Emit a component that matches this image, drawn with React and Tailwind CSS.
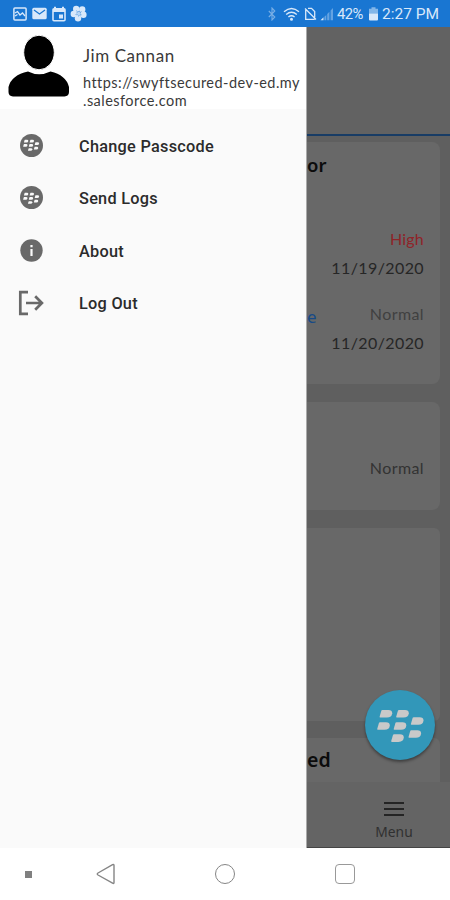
const BERRIES = [
  [14.4, 20],
  [31, 20],
  [12, 32.2],
  [28.5, 32.2],
  [45.7, 27.2],
  [43.3, 40.2],
  [26, 44.3],
];

function Berry({ className }) {
  return (
    <svg viewBox="0 0 70 70" className={className} fill="currentColor">
      {BERRIES.map(([x, y]) => (
        <path key={`${x}-${y}`} transform={`translate(${x} ${y})`} d="M2 .6Q2.2 0 3 0H9Q12.8 0 12.8 3.2Q12.4 7.6 7.6 7.6H.8Q0 7.6.2 6.8Z" />
      ))}
    </svg>
  );
}

function BerryBadge() {
  return (
    <span className="flex size-[23px] items-center justify-center rounded-full bg-[#696969] text-[#fafafa]">
      <Berry className="size-[24px] shrink-0" />
    </span>
  );
}

function InfoBadge() {
  return (
    <svg viewBox="0 0 23 23" className="size-[23px]">
      <circle cx="11.5" cy="11.5" r="11.2" fill="#696969" />
      <path d="M10.4 6h2.2v2.3h-2.2zM10.4 10h2.2v7h-2.2z" fill="#fafafa" />
    </svg>
  );
}

function LogOutIcon() {
  return (
    <svg viewBox="0 0 26 26" className="size-[26px]" fill="none" stroke="#696969" strokeWidth="2.7">
      <path d="M10 2.2H2.3v21.6H10" />
      <path d="M8 13h15.5M17.2 6.3 23.9 13l-6.7 6.7" />
    </svg>
  );
}

function StatusBar() {
  return (
    <header className="flex h-[27px] items-center bg-[#1976d2] pl-[13px] text-[#d8e8fa]">
      <svg viewBox="0 0 14 14" className="h-[14px] w-[14px]" fill="none" stroke="currentColor" strokeWidth="1.5">
        <rect x=".9" y=".9" width="12.2" height="12.2" rx="1" />
        <path d="M2 6 4.500 4.500 7 8l2.500-2L12 9M2 9l2.500-1.500" strokeWidth="1.3" />
      </svg>
      <svg viewBox="0 0 15 13" className="ml-[5px] h-[13px] w-[15px]">
        <rect x=".3" y=".8" width="14.4" height="11.4" rx="1.5" fill="currentColor" />
        <path d="m2 3 5.5 4L13 3" fill="none" stroke="#1976d2" strokeWidth="1.2" />
      </svg>
      <svg viewBox="0 0 14 16" className="ml-[5px] h-[16px] w-[14px]">
        <path d="M3 .8v3M11 .8v3" stroke="currentColor" strokeWidth="2" />
        <rect x="1" y="2.8" width="12" height="12" rx="1" fill="none" stroke="currentColor" strokeWidth="1.6" />
        <path d="M1 3h12v3H1zM7 8.5h4v4H7z" fill="currentColor" />
      </svg>
      <svg viewBox="0 0 17 17" className="ml-[4px] h-[17px] w-[17px]">
        <g fill="currentColor">
          <circle cx="6.2" cy="4" r="3.2" />
          <circle cx="12.2" cy="4.4" r="3.2" />
          <circle cx="3.8" cy="9" r="3.2" />
          <circle cx="13.4" cy="9.8" r="3.2" />
          <circle cx="8" cy="13.2" r="3.2" />
        </g>
        <path d="m8.5 8.5-2-3M8.5 8.5l3-2M8.5 8.5l-3 1M8.5 8.5v3M8.5 8.5l3 1.3" stroke="#5f9fe0" strokeWidth=".8" />
        <circle cx="8.7" cy="8.6" r="1.8" fill="#b8d6f5" />
      </svg>
      <svg viewBox="0 0 8 14" className="ml-[181px] h-[14px] w-[8px] opacity-50" fill="none" stroke="currentColor" strokeWidth="1.1">
        <path d="m.8 4 6 6L4 13V1l2.8 3-6 6" />
      </svg>
      <svg viewBox="0 0 17 14" className="ml-[7px] h-[14px] w-[17px]" fill="none" stroke="currentColor" strokeWidth="1.4">
        <path d="M1 4.8Q8.5-1.9 16 4.8M3.2 7.5q5.3-4.4 10.6 0M5.4 10q3.1-2.4 6.2 0" />
        <circle cx="8.5" cy="12.3" r=".8" fill="currentColor" />
      </svg>
      <svg viewBox="0 0 13 14" className="ml-[4px] h-[14px] w-[13px]" fill="none" stroke="currentColor" strokeWidth="1.3">
        <path d="M4 1.4h3.5l3.2 3.2v6M1.7 3v9.4h9M1 1.5l11 11" />
      </svg>
      <svg viewBox="0 0 14 14" className="ml-[3px] h-[14px] w-[14px]" fill="currentColor">
        <path d="M.5 13.2h3v-3z" />
        <path d="M4.4 9.7v3.5h1.9V8zM7.2 7v6.2h2.2V4.8zM10.6 3.6v9.6H13V1z" opacity=".4" />
      </svg>
      <span className="ml-[3px] w-[27px] whitespace-nowrap pt-[2px] font-[Roboto,sans-serif] text-[14.8px] leading-[25px] tracking-[-0.6px]">42%</span>
      <svg viewBox="0 0 9 14" className="ml-[5px] h-[14px] w-[9px]">
        <path d="M2.5.3h4v1.5H9v5H0v-5h2.5z" fill="#82b6e9" />
        <path d="M0 6.6h9v6q0 1-1 1H1q-1 0-1-1z" fill="currentColor" />
      </svg>
      <span className="ml-[4px] whitespace-nowrap pt-[2px] font-[Roboto,sans-serif] text-[15.5px] leading-[25px]">2:27 PM</span>
    </header>
  );
}

function Profile() {
  return (
    <div className="flex h-[82px] shrink-0 bg-white">
      <svg viewBox="0 0 62 63" className="ml-[8px] mt-[8px] h-[63px] w-[62px] shrink-0">
        <path d="M20 36.500Q31 42 42.500 36.500 58 40 61 52V57Q61 61 56.500 61.500H5Q.5 61 .5 57V52Q3.500 40 20 36.500Z" />
        <ellipse cx="31" cy="17.500" rx="15.300" ry="17.300" stroke="#fff" strokeWidth="1" />
      </svg>
      <div className="ml-[13px] whitespace-nowrap font-[Lato,sans-serif] text-[#3a3a3a]">
        <p className="mt-[19px] text-[17px] leading-[20px] tracking-[0.55px]">Jim Cannan</p>
        <p className="mt-[8px] text-[14.5px] leading-[18px] tracking-[0.46px]">
          https://swyftsecured-dev-ed.my
          <br />
          .salesforce.com
        </p>
      </div>
    </div>
  );
}

const MENU = [
  ["Change Passcode", <BerryBadge />],
  ["Send Logs", <BerryBadge />],
  ["About", <InfoBadge />],
  ["Log Out", <LogOutIcon />],
];

function Drawer() {
  return (
    <aside className="flex w-[307px] shrink-0 flex-col border-r border-[#aaa] bg-[#fafafa]">
      <Profile />
      <nav className="mt-[10px] flex flex-col">
        {MENU.map(([label, icon]) => (
          <div key={label} className="flex h-[52.5px] items-center">
            <span className="ml-[18px] flex w-[26px] items-center justify-center">{icon}</span>
            <span className="ml-[35px] whitespace-nowrap pt-[3px] font-[Roboto,sans-serif] text-[16.3px] font-medium leading-[20px] tracking-[0.27px] text-[#2b2b2b]">
              {label}
            </span>
          </div>
        ))}
      </nav>
    </aside>
  );
}

function Backdrop() {
  return (
    <main className="relative flex min-w-0 flex-1 flex-col overflow-hidden bg-[#5f5f5f] font-[Lato,sans-serif]">
      <div className="h-[109px] shrink-0 border-b-2 border-[#183c65] bg-[#626262]" />
      <section className="mr-[10px] mt-[6px] flex h-[242px] shrink-0 flex-col rounded-r-[8px] bg-[#686868] pr-[16px]">
        <h2 className="mt-[11px] font-['Noto_Sans',sans-serif] text-[18.5px] font-semibold leading-[24px] text-[#0c0c0c]">or</h2>
        <p className="mt-[51px] text-right text-[16px] leading-[22px] tracking-[0.2px] text-[#8f2428]">High</p>
        <p className="mt-[7px] whitespace-nowrap text-right text-[16px] leading-[22px] tracking-[0.4px] text-[#262626]">11/19/2020</p>
        <div className="mt-[24px] flex items-start justify-between leading-[22px]">
          <span className="mt-[3px] font-['Noto_Sans',sans-serif] text-[17px] text-[#174a87]">e</span>
          <span className="text-[16px] tracking-[0.4px] text-[#404040]">Normal</span>
        </div>
        <p className="mt-[4px] whitespace-nowrap text-right text-[16px] leading-[22px] tracking-[0.4px] text-[#262626]">11/20/2020</p>
      </section>
      <section className="mr-[10px] mt-[18px] h-[108px] shrink-0 rounded-r-[8px] bg-[#686868] pr-[16px] pt-[55px] text-right text-[16px] leading-[22px] tracking-[0.4px] text-[#333]">
        Normal
      </section>
      <section className="mr-[10px] mt-[18px] h-[193px] shrink-0 rounded-r-[6px] bg-[#686868]" />
      <section className="mr-[10px] mt-[17px] h-[44px] shrink-0 rounded-tr-[6px] bg-[#686868] pt-[10px]">
        <h2 className="font-['Noto_Sans',sans-serif] text-[19.5px] font-semibold leading-[24px] text-[#0c0c0c]">ed</h2>
      </section>
      <footer className="flex flex-1 flex-col items-center bg-[#646464] pl-[31px] shadow-[inset_0_-1px_0_#444]">
        <svg viewBox="0 0 20 14" className="mt-[20px] h-[14px] w-[20px]">
          <path d="M0 1h20M0 7h20M0 13h20" stroke="#242424" strokeWidth="1.8" />
        </svg>
        <span className="mt-[6px] font-['Noto_Sans',sans-serif] text-[13.8px] leading-[19px] text-[#303030]">Menu</span>
      </footer>
      <button className="absolute left-[58px] top-[663px] size-[70px] rounded-full bg-[#3297b9] text-[#c9c9c9] shadow-[0_2px_3px_rgba(0,0,0,0.4)]">
        <Berry className="size-[70px]" />
      </button>
    </main>
  );
}

function SystemNav() {
  return (
    <footer className="flex h-[52px] items-center bg-white">
      <span className="ml-[25px] size-[7px] bg-[#808080]" />
      <svg viewBox="0 0 20 22" className="ml-[64px] h-[22px] w-[20px]" fill="none" stroke="#858585" strokeWidth="1.4" strokeLinejoin="round">
        <path d="M16.600 1.700Q18 1 18 2.600V19.400Q18 21 16.600 20.200L2 12Q.5 11 2 10Z" />
      </svg>
      <span className="ml-[99px] size-[20px] rounded-full border-[1.5px] border-[#858585]" />
      <span className="ml-[100px] size-[20px] rounded-[4px] border-[1.5px] border-[#999]" />
    </footer>
  );
}

export default function App() {
  return (
    <div className="flex h-[900px] w-[450px] flex-col overflow-hidden bg-white">
      <StatusBar />
      <div className="flex h-[821px]">
        <Drawer />
        <Backdrop />
      </div>
      <SystemNav />
    </div>
  );
}
